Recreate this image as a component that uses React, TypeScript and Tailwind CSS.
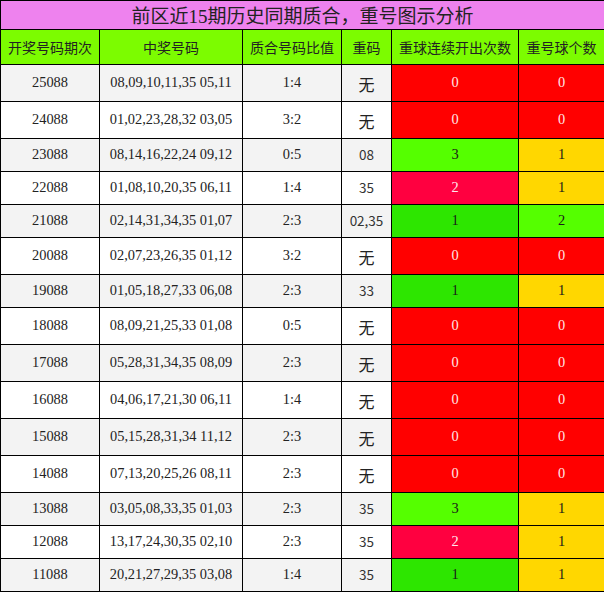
const rows = [
  { qi: "25088", nums: "08,09,10,11,35 05,11", ratio: "1:4", rep: "无", run: 0, cnt: 0 },
  { qi: "24088", nums: "01,02,23,28,32 03,05", ratio: "3:2", rep: "无", run: 0, cnt: 0 },
  { qi: "23088", nums: "08,14,16,22,24 09,12", ratio: "0:5", rep: "08", run: 3, cnt: 1 },
  { qi: "22088", nums: "01,08,10,20,35 06,11", ratio: "1:4", rep: "35", run: 2, cnt: 1 },
  { qi: "21088", nums: "02,14,31,34,35 01,07", ratio: "2:3", rep: "02,35", run: 1, cnt: 2 },
  { qi: "20088", nums: "02,07,23,26,35 01,12", ratio: "3:2", rep: "无", run: 0, cnt: 0 },
  { qi: "19088", nums: "01,05,18,27,33 06,08", ratio: "2:3", rep: "33", run: 1, cnt: 1 },
  { qi: "18088", nums: "08,09,21,25,33 01,08", ratio: "0:5", rep: "无", run: 0, cnt: 0 },
  { qi: "17088", nums: "05,28,31,34,35 08,09", ratio: "2:3", rep: "无", run: 0, cnt: 0 },
  { qi: "16088", nums: "04,06,17,21,30 06,11", ratio: "1:4", rep: "无", run: 0, cnt: 0 },
  { qi: "15088", nums: "05,15,28,31,34 11,12", ratio: "2:3", rep: "无", run: 0, cnt: 0 },
  { qi: "14088", nums: "07,13,20,25,26 08,11", ratio: "2:3", rep: "无", run: 0, cnt: 0 },
  { qi: "13088", nums: "03,05,08,33,35 01,03", ratio: "2:3", rep: "35", run: 3, cnt: 1 },
  { qi: "12088", nums: "13,17,24,30,35 02,10", ratio: "2:3", rep: "35", run: 2, cnt: 1 },
  { qi: "11088", nums: "20,21,27,29,35 03,08", ratio: "1:4", rep: "35", run: 1, cnt: 1 },
];

const runStyle: Record<number, string> = {
  0: "bg-[#ff0000] text-[#ffe8e8]",
  1: "bg-[#2de600] text-[#1a1a1a]",
  2: "bg-[#ff0040] text-[#ffe8ee]",
  3: "bg-[#55ff00] text-[#1a1a1a]",
};

const cntStyle: Record<number, string> = {
  0: "bg-[#ff0000] text-[#ffe8e8]",
  1: "bg-[#ffd700] text-[#1a1a1a]",
  2: "bg-[#55ff00] text-[#1a1a1a]",
};

const cjk = "font-['Noto_Sans_CJK_SC',sans-serif]";
const serif = "font-['Liberation_Serif','Noto_Sans_CJK_SC',serif]";

export default function App() {
  return (
    <div className="w-[604px] h-[592px] bg-white">
      <table className="w-[604px] table-fixed border-collapse text-center text-[#222]">
        <colgroup>
          <col className="w-[99px]" />
          <col className="w-[143px]" />
          <col className="w-[99px]" />
          <col className="w-[50px]" />
          <col className="w-[127px]" />
          <col className="w-[86px]" />
        </colgroup>
        <thead>
          <tr className="h-[29px]">
            <th colSpan={6} className={`border border-black bg-[#ee82ee] p-0 text-[19px] font-normal leading-none ${cjk}`}>
              前区近<span className="font-['Liberation_Serif']">15</span>期历史同期质合，重号图示分析
            </th>
          </tr>
          <tr className="h-[35px] bg-[#7cfc00]">
            {["开奖号码期次", "中奖号码", "质合号码比值", "重码", "重球连续开出次数", "重号球个数"].map((h) => (
              <th key={h} className={`border border-black p-0 text-[14px] font-normal ${cjk}`}>
                {h}
              </th>
            ))}
          </tr>
        </thead>
        <tbody>
          {rows.map((r, i) => (
            <tr key={r.qi} className={`${r.rep === "无" ? "h-[37px]" : "h-[33px]"} ${i % 2 === 0 ? "bg-[#f3f3f3]" : "bg-white"}`}>
              <td className={`border border-black p-0 text-[14.4px] ${serif}`}>{r.qi}</td>
              <td className={`border border-black p-0 text-[14.4px] ${serif}`}>{r.nums}</td>
              <td className={`border border-black p-0 text-[14.4px] ${serif}`}>{r.ratio}</td>
              <td className={`border border-black p-0 ${cjk} ${r.rep === "无" ? "text-[16px] pt-[2px]" : "text-[13.5px] text-[#333] leading-none"}`}>{r.rep}</td>
              <td className={`border border-black p-0 text-[14.4px] ${serif} ${runStyle[r.run]}`}>{r.run}</td>
              <td className={`border border-black p-0 text-[14.4px] ${serif} ${cntStyle[r.cnt]}`}>{r.cnt}</td>
            </tr>
          ))}
        </tbody>
      </table>
    </div>
  );
}
